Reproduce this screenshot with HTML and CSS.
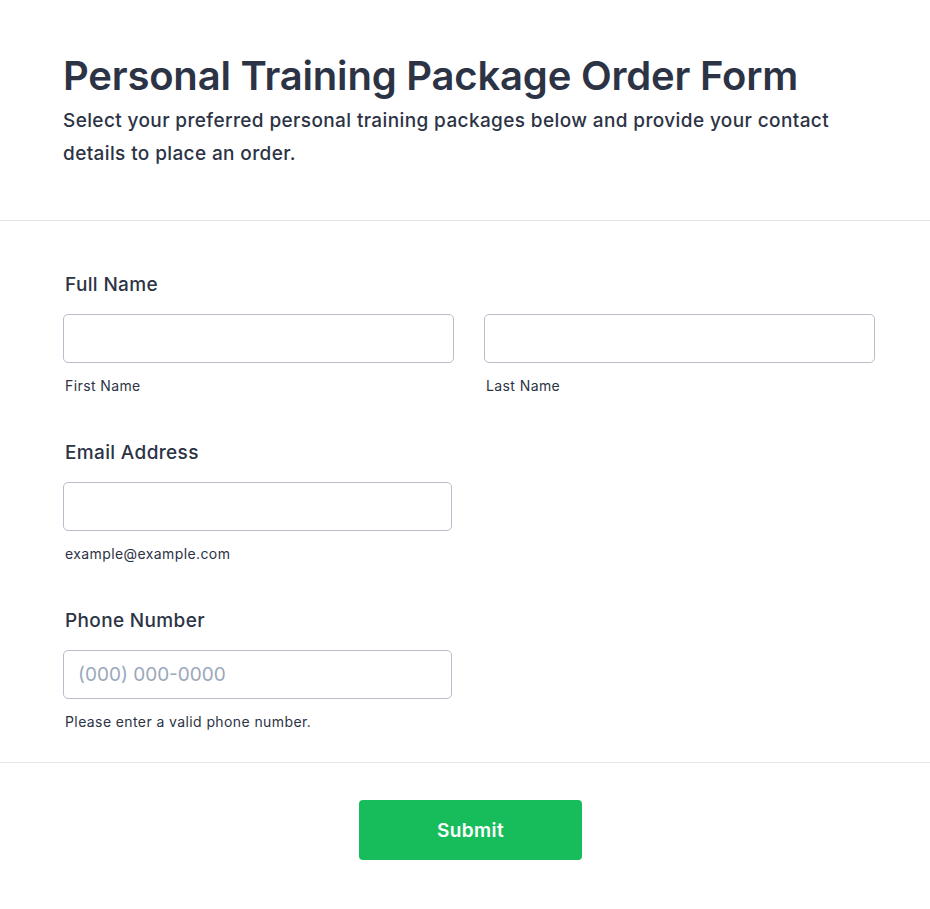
FILE: index.html
```html
<!DOCTYPE html>
<html lang="en">
<head>
<meta charset="utf-8">
<title>Personal Training Package Order Form</title>
<link rel="stylesheet" href="styles.css">
</head>
<body>
<form class="form">
  <header class="form-header">
    <h1 class="form-title">Personal Training Package Order Form</h1>
    <p class="form-subtitle">Select your preferred personal training packages below and provide your contact details to place an order.</p>
  </header>
  <section class="form-body">
    <div class="field">
      <label class="field-label">Full Name</label>
      <div class="field-row">
        <div class="field-col">
          <input class="input" type="text">
          <span class="sublabel">First Name</span>
        </div>
        <div class="field-col">
          <input class="input" type="text">
          <span class="sublabel">Last Name</span>
        </div>
      </div>
    </div>
    <div class="field">
      <label class="field-label">Email Address</label>
      <div class="field-row">
        <div class="field-col field-col-half">
          <input class="input" type="email">
          <span class="sublabel">example@example.com</span>
        </div>
      </div>
    </div>
    <div class="field field-last">
      <label class="field-label">Phone Number</label>
      <div class="field-row">
        <div class="field-col field-col-half">
          <input class="input" type="tel" placeholder="(000) 000-0000">
          <span class="sublabel">Please enter a valid phone number.</span>
        </div>
      </div>
    </div>
  </section>
  <footer class="form-footer">
    <button class="submit" type="button">Submit</button>
  </footer>
</form>
</body>
</html>
```
FILE: styles.css
```css
* { box-sizing: border-box; }
html, body { margin: 0; padding: 0; background: #fff; }
body {
  font-family: Inter, "Noto Sans", "Liberation Sans", sans-serif;
  color: #2c3345;
}
.form-header {
  padding: 52px 63px 50px;
  border-bottom: 1px solid #e2e5ea;
}
.form-title {
  margin: 0;
  font-size: 40px;
  line-height: 48px;
  font-weight: 600;
  letter-spacing: -0.2px;
}
.form-subtitle {
  margin: 4px 0 0;
  font-size: 19px;
  line-height: 33px;
  font-weight: 500;
  letter-spacing: 0.38px;
  max-width: 840px;
}
.form-body {
  padding: 53px 54px 31px 63px;
  border-bottom: 1px solid #e2e5ea;
}
.field { margin-bottom: 47px; }
.field + .field-last { margin-top: 1px; }
.field-last { margin-bottom: 0; }
.field-label {
  display: block;
  font-size: 19px;
  line-height: 22px;
  font-weight: 500;
  letter-spacing: 0.35px;
  padding-left: 2px;
  margin-bottom: 18px;
}
.field-row {
  display: flex;
  gap: 30px;
}
.field-col {
  display: flex;
  flex-direction: column;
  width: 391px;
}
.field-col-half { width: 389px; }
.input {
  height: 49px;
  width: 100%;
  border: 1px solid #b8bdc9;
  border-radius: 5px;
  padding: 0 14px;
  font-family: inherit;
  font-size: 19px;
  color: #2c3345;
  background: #fff;
}
.input::placeholder { color: #99a8ba; }
.sublabel {
  display: block;
  margin-top: 14px;
  font-size: 14px;
  line-height: 18px;
  letter-spacing: 0.4px;
  padding-left: 2px;
}
.form-footer {
  display: flex;
  justify-content: center;
  padding: 37px 0 49px 11px;
}
.submit {
  width: 223px;
  height: 60px;
  border: none;
  border-radius: 4px;
  background: #18bd5b;
  color: #fff;
  font-family: inherit;
  font-size: 19px;
  font-weight: 600;
  letter-spacing: 0.4px;
  cursor: pointer;
}
```
